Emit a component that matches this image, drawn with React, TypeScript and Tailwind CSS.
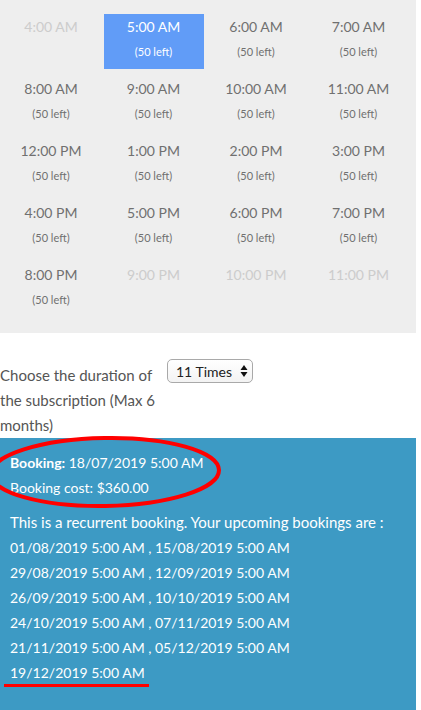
const slots = [
  { t: "4:00 AM", left: false },
  { t: "5:00 AM", left: true, selected: true },
  { t: "6:00 AM", left: true },
  { t: "7:00 AM", left: true },
  { t: "8:00 AM", left: true },
  { t: "9:00 AM", left: true },
  { t: "10:00 AM", left: true },
  { t: "11:00 AM", left: true },
  { t: "12:00 PM", left: true },
  { t: "1:00 PM", left: true },
  { t: "2:00 PM", left: true },
  { t: "3:00 PM", left: true },
  { t: "4:00 PM", left: true },
  { t: "5:00 PM", left: true },
  { t: "6:00 PM", left: true },
  { t: "7:00 PM", left: true },
  { t: "8:00 PM", left: true },
  { t: "9:00 PM", left: false },
  { t: "10:00 PM", left: false },
  { t: "11:00 PM", left: false },
]

const upcoming = [
  "01/08/2019 5:00 AM , 15/08/2019 5:00 AM",
  "29/08/2019 5:00 AM , 12/09/2019 5:00 AM",
  "26/09/2019 5:00 AM , 10/10/2019 5:00 AM",
  "24/10/2019 5:00 AM , 07/11/2019 5:00 AM",
  "21/11/2019 5:00 AM , 05/12/2019 5:00 AM",
]

export default function App() {
  return (
    <div className="w-[421px] h-[710px] overflow-hidden bg-white font-['Lato',sans-serif]">
      <div className="w-[416px]">
        {/* Time slots */}
        <div className="bg-[#eeeeee] pt-[14px] pb-[16px] pl-[1px]">
          <div className="grid grid-cols-[repeat(4,100px)] gap-x-[2.5px] gap-y-[7px]">
            {slots.map((s) => (
              <div
                key={s.t}
                className={`h-[55px] flex flex-col items-center pt-[4px] ${s.selected ? "bg-[#619cf7] text-white" : ""}`}
              >
                <div
                  className={`text-[14px] leading-[18px] ${
                    s.selected ? "text-white" : s.left ? "text-[#707070]" : "text-[#cccccc]"
                  }`}
                >
                  {s.t}
                </div>
                {s.left && (
                  <div className={`mt-[9px] text-[11px] leading-[14px] ${s.selected ? "text-white" : "text-[#707070]"}`}>
                    (50 left)
                  </div>
                )}
              </div>
            ))}
          </div>
        </div>

        {/* Duration */}
        <div className="flex items-start pt-[24px]">
          <p className="w-[162px] text-[15px] leading-[25px] text-[#555555] pt-[6px]">
            Choose the duration of the subscription (Max 6 months)
          </p>
          <div className="ml-[5px] mt-[2px] w-[86px] h-[24px] rounded-[5px] border border-[#a9a9a9] bg-gradient-to-b from-white to-[#f3f3f3] flex items-center justify-between pl-[8px] pr-[4px] text-[14px] text-[#222222]">
            <span>11 Times</span>
            <svg width="8" height="14" viewBox="0 0 8 14">
              <path d="M4 1 L7.5 6 H0.5 Z" fill="#111" />
              <path d="M4 13 L7.5 8 H0.5 Z" fill="#111" />
            </svg>
          </div>
        </div>

        {/* Booking summary */}
        <div className="relative bg-[#3d9ac4] text-white text-[14px] leading-[25px] pl-[10px] pt-[12px] h-[273px]">
          <div>
            <span className="font-bold">Booking:</span> 18/07/2019 5:00 AM
          </div>
          <div>Booking cost: $360.00</div>
          <div className="mt-[10px] text-[15px]">This is a recurrent booking. Your upcoming bookings are :</div>
          {upcoming.map((l) => (
            <div key={l}>{l}</div>
          ))}
          <div>19/12/2019 5:00 AM</div>

          <svg className="absolute left-0 top-[-3px]" width="240" height="80" viewBox="0 0 240 80">
            <ellipse cx="105" cy="37" rx="114" ry="34" fill="none" stroke="#ff0000" strokeWidth="4" transform="rotate(-1 105 37)" />
          </svg>
          <div className="absolute left-[4px] top-[246px] w-[145px] h-[3px] bg-[#ff0000]" />
        </div>
      </div>
    </div>
  )
}
